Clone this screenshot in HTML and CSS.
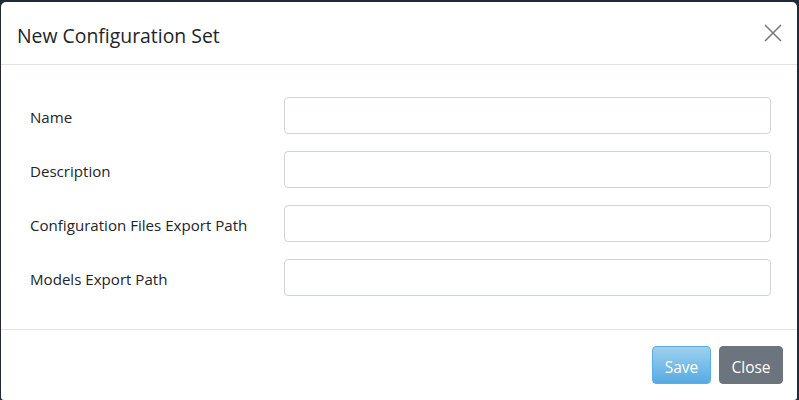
FILE: index.html
```html
<!DOCTYPE html>
<html>
<head>
<meta charset="utf-8">
<link rel="stylesheet" href="styles.css">
</head>
<body>
<div class="modal">
  <div class="modal-header">
    <h5 class="modal-title">New Configuration Set</h5>
    <button class="close" aria-label="Close">
      <svg width="18" height="18" viewBox="0 0 18 18"><path d="M1 1L17 17M17 1L1 17" stroke="#7a7a7a" stroke-width="1.6" fill="none"/></svg>
    </button>
  </div>
  <div class="modal-body">
    <div class="form-row"><label class="form-label">Name</label><input class="form-control" type="text"></div>
    <div class="form-row"><label class="form-label">Description</label><input class="form-control" type="text"></div>
    <div class="form-row"><label class="form-label">Configuration Files Export Path</label><input class="form-control" type="text"></div>
    <div class="form-row"><label class="form-label">Models Export Path</label><input class="form-control" type="text"></div>
  </div>
  <div class="modal-footer">
    <button class="btn btn-save">Save</button>
    <button class="btn btn-close">Close</button>
  </div>
</div>
</body>
</html>
```
FILE: styles.css
```css
html, body {
  margin: 0;
  padding: 0;
  height: 100%;
  overflow: hidden;
}
body {
  background: #212a36;
  font-family: "Open Sans", "Noto Sans", sans-serif;
  color: #212529;
}
.modal {
  margin: 2px 0 0 1px;
  width: 796px;
  height: 398px;
  overflow: hidden;
  background: #fff;
  border-radius: 5px 5px 3px 3px;
}
.modal-header {
  display: flex;
  align-items: center;
  justify-content: space-between;
  box-sizing: border-box;
  height: 63px;
  padding: 4px 15px 0 16px;
  border-bottom: 1px solid #dee2e6;
}
.modal-title {
  margin: 0;
  font-size: 19.4px;
  font-weight: 400;
}
.close {
  background: none;
  border: 0;
  padding: 0;
  margin-top: -4px;
  width: 18px;
  height: 18px;
  display: flex;
}
.modal-body {
  padding: 32px 26px 33px 29px;
  display: flex;
  flex-direction: column;
  gap: 17px;
}
.form-row {
  display: flex;
  align-items: center;
}
.form-label {
  width: 254px;
  padding-top: 3px;
  font-size: 15.1px;
}
.form-control {
  flex: 1;
  height: 37px;
  box-sizing: border-box;
  border: 1px solid #ced4da;
  border-radius: 4px;
  margin: 0;
}
.modal-footer {
  border-top: 1px solid #dee2e6;
  padding: 16px 14px 0 0;
  display: flex;
  justify-content: flex-end;
  gap: 8px;
}
.btn {
  height: 38px;
  border-radius: 4px;
  font-family: inherit;
  font-size: 15.5px;
  color: #fff;
  padding: 3px 0 0;
}
.btn-save {
  width: 59px;
  border: 1px solid #5aaee3;
  background: linear-gradient(#9ed0f0, #56abe2);
}
.btn-close {
  width: 64px;
  border: 1px solid #6c757d;
  background: #6c757d;
}
```
